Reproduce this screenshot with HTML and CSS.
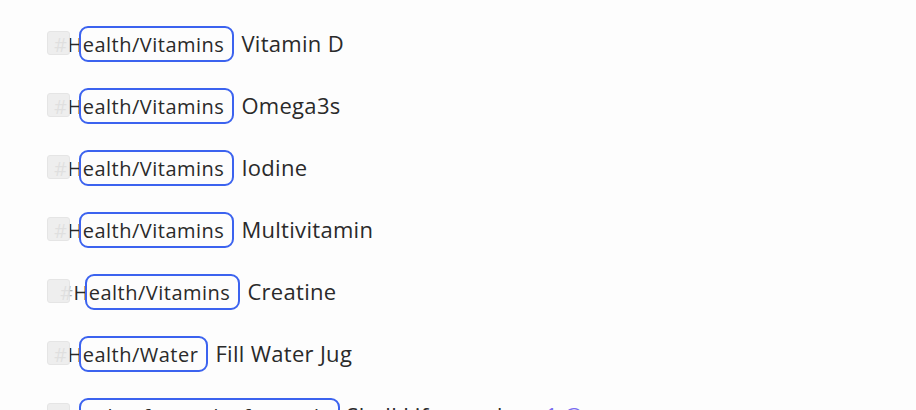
FILE: index.html
```html
<!DOCTYPE html>
<html>
<head>
<meta charset="utf-8">
<link rel="stylesheet" href="styles.css">
</head>
<body>
<ul class="list">
  <li class="row"><span class="check"></span><span class="tag"><span class="hash">#</span>Health/Vitamins</span><span class="title">Vitamin D</span></li>
  <li class="row"><span class="check"></span><span class="tag"><span class="hash">#</span>Health/Vitamins</span><span class="title">Omega3s</span></li>
  <li class="row"><span class="check"></span><span class="tag"><span class="hash">#</span>Health/Vitamins</span><span class="title">Iodine</span></li>
  <li class="row"><span class="check"></span><span class="tag"><span class="hash">#</span>Health/Vitamins</span><span class="title">Multivitamin</span></li>
  <li class="row"><span class="check"></span><span class="tag tag-shift"><span class="hash">#</span>Health/Vitamins</span><span class="title">Creatine</span></li>
  <li class="row"><span class="check"></span><span class="tag"><span class="hash">#</span>Health/Water</span><span class="title">Fill Water Jug</span></li>
  <li class="row"><span class="check"></span><span class="tag"><span class="hash">#</span>Work/Lifeguard/Lifeguards</span><span class="title">Shell Lifeguard</span><span class="extra">+1 @</span></li>
</ul>
</body>
</html>
```

FILE: styles.css
```css
html, body {
  margin: 0;
  padding: 0;
  background: #fdfdfd;
  overflow: hidden;
}
body {
  font-family: "Open Sans", "DejaVu Sans", sans-serif;
  color: #2a2a2a;
}
.list {
  list-style: none;
  margin: 0;
  padding: 12px 0 0 47px;
}
.row {
  display: flex;
  align-items: center;
  height: 62px;
  white-space: nowrap;
}
.check {
  flex: none;
  width: 21px;
  height: 22px;
  background: #ebebeb;
  border: 1px solid #e0e0e0;
  border-radius: 3px;
  margin-right: -16px;
  position: relative;
  z-index: 1;
  opacity: 0.8;
}
.tag {
  position: relative;
  font-size: 20px;
  line-height: 24px;
  letter-spacing: 0.5px;
  padding-top: 4px;
}
.tag::after {
  content: "";
  position: absolute;
  left: 25px;
  right: -10px;
  top: -3px;
  bottom: -5px;
  border: 2px solid #3c63ef;
  border-radius: 9px;
}
.tag-shift {
  margin-left: 6px;
}
.hash {
  color: #b3b3b3;
}
.title {
  font-size: 22px;
  line-height: 26px;
  margin-left: 17px;
  letter-spacing: 0.3px;
}
.extra {
  font-size: 22px;
  margin-left: 30px;
  color: #7a6cf0;
}
```
